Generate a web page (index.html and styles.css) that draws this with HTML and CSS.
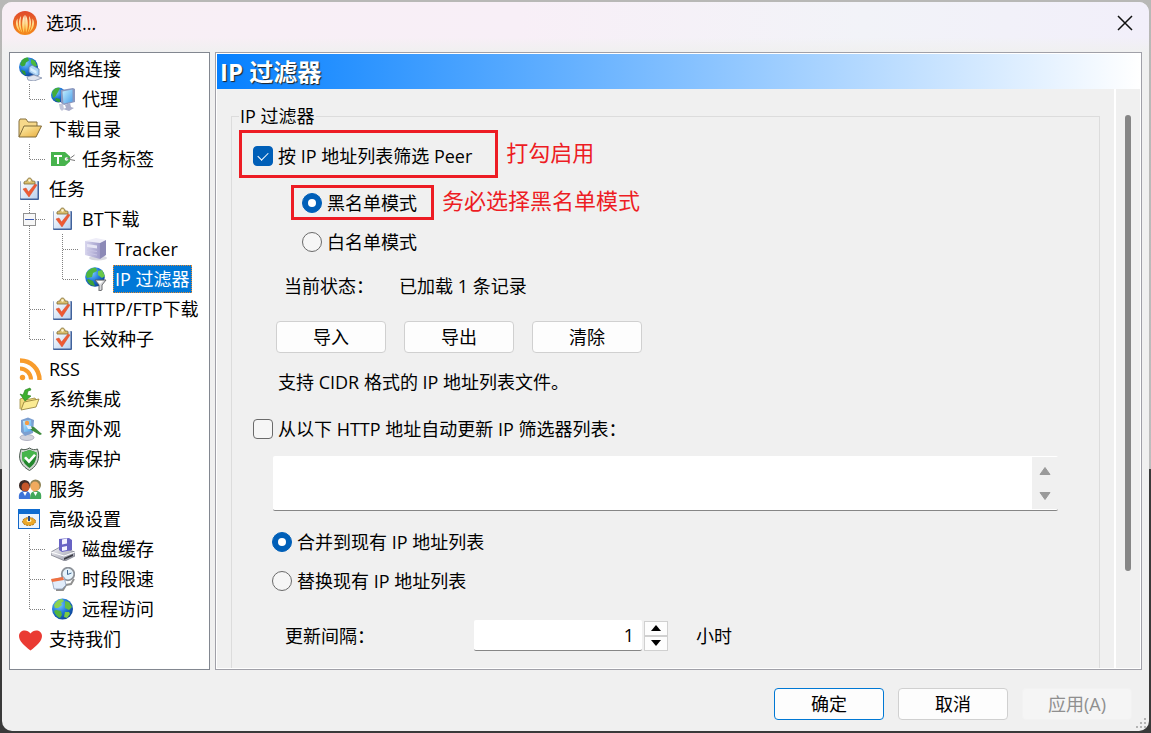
FILE: index.html
```html
<!DOCTYPE html>
<html lang="zh-CN">
<head>
  <meta charset="UTF-8" />
  <meta name="viewport" content="width=device-width, initial-scale=1.0"/>
  <title>选项...</title>
  <link rel="stylesheet" href="styles.css">
</head>
<body>
  <svg class="sprite" width="0" height="0" aria-hidden="true">
    <defs>
      <linearGradient id="gOrange" x1="0" y1="0" x2="0" y2="1">
        <stop offset="0" stop-color="#e0492c"/><stop offset="1" stop-color="#f58a1c"/>
      </linearGradient>
      <linearGradient id="gFlame" x1="0" y1="0" x2="0" y2="1">
        <stop offset="0" stop-color="#fff4e2"/><stop offset="1" stop-color="#ffc53a"/>
      </linearGradient>
      <radialGradient id="gGlobe" cx=".35" cy=".3" r=".8">
        <stop offset="0" stop-color="#7cc8ff"/><stop offset=".5" stop-color="#1f78d8"/><stop offset="1" stop-color="#083a8c"/>
      </radialGradient>
      <linearGradient id="gFolder" x1="0" y1="0" x2="1" y2="1">
        <stop offset="0" stop-color="#fff2b0"/><stop offset="1" stop-color="#e8ac3c"/>
      </linearGradient>
      <linearGradient id="gPaper" x1="0" y1="0" x2="1" y2="1">
        <stop offset="0" stop-color="#ffffff"/><stop offset="1" stop-color="#bcd2ee"/>
      </linearGradient>
      <linearGradient id="gScreen" x1="0" y1="0" x2="1" y2="1">
        <stop offset="0" stop-color="#c4f0ff"/><stop offset="1" stop-color="#4a9fea"/>
      </linearGradient>
      <linearGradient id="gMetal" x1="0" y1="0" x2="1" y2="1">
        <stop offset="0" stop-color="#f6f6fa"/><stop offset="1" stop-color="#8e90a0"/>
      </linearGradient>
      <linearGradient id="gServer" x1="0" y1="0" x2="1" y2="0">
        <stop offset="0" stop-color="#d8d6ee"/><stop offset="1" stop-color="#a09cca"/>
      </linearGradient>
    </defs>

    <!-- tree connectors -->
    <symbol id="tee" viewBox="0 0 33 30">
      <path d="M16.500 0V30M17 15.500H33" fill="none" stroke="#808080" stroke-dasharray="1 1"/>
    </symbol>
    <symbol id="elbow" viewBox="0 0 33 30">
      <path d="M16.500 0V16M17 15.500H33" fill="none" stroke="#808080" stroke-dasharray="1 1"/>
    </symbol>
    <symbol id="pipe" viewBox="0 0 33 30">
      <path d="M16.500 0V30" fill="none" stroke="#808080" stroke-dasharray="1 1"/>
    </symbol>
    <symbol id="minus" viewBox="0 0 33 30">
      <path d="M16.500 0V30M17 15.500H33" fill="none" stroke="#808080" stroke-dasharray="1 1"/>
      <rect x="10.500" y="9.500" width="12" height="12" fill="#f7f7f7" stroke="#919191"/>
      <path d="M12 15.500H21" stroke="#3c5ab4"/>
    </symbol>

    <!-- item icons -->
    <symbol id="network" viewBox="0 0 24 24">
      <circle cx="10.500" cy="10" r="9.500" fill="url(#gGlobe)"/>
      <path d="M4 3c2-2 4-2.500 6-2.500l1 3-3 2-1 3-3 1-2-2z" fill="#3aa83a"/>
      <path d="M3 13l4 1 1 4c-2 0-4-2-5-5z" fill="#2c9636"/>
      <path d="M13 2l4 2 2 5-3 1-3-4z" fill="#4cba3c"/>
      <path d="M11 10l3-2 7 4v6l-3 1-7-4z" fill="#a9d2f5" stroke="#5f7fae" stroke-width=".8"/>
      <path d="M12.500 10.500l6 3.500v3l-6-3.500z" fill="#d9efff"/>
      <path d="M9 20l7-2 8 3-8 3-6-1z" fill="#dfe4ee" stroke="#8693ae" stroke-width=".8"/>
    </symbol>
    <symbol id="proxy" viewBox="0 0 24 24">
      <circle cx="7.500" cy="8" r="7.500" fill="url(#gGlobe)"/>
      <path d="M1 5c2-4 5-5 8-4l-2 4-3 5-2 1z" fill="#44ad3b"/>
      <path d="M5 11l4 1v3c-2 .5-4-1-5-2z" fill="#2e9a36"/>
      <path d="M10 3l12-2 2 1v13l-11 3-3-2z" fill="#8b97be"/>
      <path d="M11.500 4.500l10-2v12l-9 2z" fill="url(#gScreen)"/>
      <path d="M14 18l5-2 1 4 3 1-5 3-6-2 3-1z" fill="#aaaecb"/>
      <path d="M8 17l4 0 1 5-2 2-2-2z" fill="#c3c6da"/>
    </symbol>
    <symbol id="folder" viewBox="0 0 24 24">
      <path d="M1 20V4l1-2h6l2 3h9v4" fill="#f7d98a" stroke="#86713f"/>
      <path d="M1 20l5-11h17.500L18 20z" fill="url(#gFolder)" stroke="#806a37"/>
    </symbol>
    <symbol id="tag" viewBox="0 0 24 24">
      <path d="M0 5h14l5 4.500v5L14 19H0z" fill="#47b34d"/>
      <path d="M3 8h8v2H8v7H6v-7H3z" fill="#fff"/>
      <circle cx="15.500" cy="12" r="1.800" fill="#fff"/>
      <path d="M15.500 12l4-1 4-3M19 12.500l5 1" fill="none" stroke="#777"/>
    </symbol>
    <symbol id="task" viewBox="0 0 24 24">
      <rect x="2" y="4" width="19" height="19" rx="1" fill="#41629c"/>
      <rect x="2.500" y="4" width="17" height="17.500" fill="url(#gPaper)"/>
      <path d="M6 7V5c1-1 2-1 3-1 0-4 5-4 5 0 2 0 3 0 3 1v2z" fill="#d9bd6b" stroke="#7b6a39" stroke-width=".8"/>
      <circle cx="11.500" cy="3.500" r="1.200" fill="#fff7d8"/>
      <path d="M5 12l3-1 2.500 4L17 7l2 1-8 12z" fill="#ee5a33" stroke="#d5482a" stroke-width=".5"/>
    </symbol>
    <symbol id="server" viewBox="0 0 24 24">
      <ellipse cx="14" cy="21" rx="9" ry="2.500" fill="#d8d8e0"/>
      <path d="M1 4l11-3 10 2-6 3z" fill="#eeedf8"/>
      <path d="M1 4l15 2v16L1 18z" fill="url(#gServer)"/>
      <path d="M16 6l6-3v15l-6 4z" fill="#8c89b6"/>
      <path d="M3 7l10 1.500v3L3 10z" fill="#e7e6f5"/>
      <path d="M3 13l10 1.500M3 16l10 2" stroke="#c8c5e4"/>
    </symbol>
    <symbol id="filter" viewBox="0 0 24 24">
      <circle cx="11" cy="10" r="9.800" fill="url(#gGlobe)"/>
      <path d="M3 5c3-4 7-5 9-4l1 3-4 2-1 4-5 1-1-3z" fill="#4fb63e"/>
      <path d="M14 4l4-1 3 6-3 2-4-3z" fill="#69c94a"/>
      <path d="M4 12l5 2 2 5c-4 0-7-3-8-6z" fill="#3da239"/>
      <path d="M11 13h11l-4 5v5l-3 1v-6z" fill="#d9dadd" stroke="#5c5d61" stroke-width=".9"/>
      <path d="M13 14h6l-3 3z" fill="#fff"/>
    </symbol>
    <symbol id="rss" viewBox="0 0 24 24">
      <circle cx="4.500" cy="20.500" r="2.700" fill="#f89c2c"/>
      <path d="M2 11.500c6 0 11 5 11 11" fill="none" stroke="#f89c2c" stroke-width="4"/>
      <path d="M2 3.500c11 0 19.500 8.500 19.500 19.500" fill="none" stroke="#f89c2c" stroke-width="4.400"/>
    </symbol>
    <symbol id="integrate" viewBox="0 0 24 24">
      <path d="M2 22V12l3-1 2 2 10-2 2 4" fill="#f2db7c" stroke="#9c8a3d" stroke-width=".8"/>
      <path d="M3 23l3-8 15-3-3 8z" fill="#fbeb94" stroke="#8d7a35" stroke-width=".8"/>
      <path d="M12 1l-5 2-2 5-3-1 5 7 6-5-4-1 1-4 3-1z" fill="#3db02e" stroke="#24801b" stroke-width=".6"/>
    </symbol>
    <symbol id="look" viewBox="0 0 24 24">
      <ellipse cx="9" cy="20.500" rx="7" ry="3" fill="#d2d3dc" stroke="#8b8fa5" stroke-width=".6"/>
      <path d="M3 3l7-2.500 6 2.500-1 13-8 3-4-4z" fill="#7c9fd0"/>
      <path d="M5 4l8-1 1 11-8 1z" fill="url(#gScreen)"/>
      <circle cx="9" cy="6" r="2.200" fill="#f49b45"/>
      <path d="M11 9l5 1 8 7-2 1-9-5z" fill="#3e8b3c"/>
      <path d="M8 8l5 1 1 3-4 0z" fill="#e4eefb"/>
    </symbol>
    <symbol id="shield" viewBox="0 0 24 24">
      <path d="M11.500 1c3 2 5 2 8 1l1 4c1 8-3 14-9 17.500C5 20 0 14 2 6l1-4c3 1 5 1 8.500-1z" fill="#d0d5d1" stroke="#4b5a50"/>
      <path d="M11.500 3l7 2.500c.5 7-2 12-7 15.500-5.500-3.500-8-8.500-7.500-15.500z" fill="#23872d"/>
      <path d="M11.500 3l7 2.500v3l-14 6C4 11 4 8 4 5.500z" fill="#46b54b"/>
      <path d="M6 11l2-1.500 3 3L16 7l2 1.500-7 8z" fill="#fff"/>
    </symbol>
    <symbol id="people" viewBox="0 0 24 24">
      <path d="M1 22c-1-6 2-8 6-8s6 2 5 8z" fill="#3d73d8"/>
      <path d="M12 22c0-6 2-8 6-8s6 2 5 8z" fill="#43a85a"/>
      <circle cx="6.500" cy="8.500" r="5.500" fill="#3c2a26"/>
      <ellipse cx="7.500" cy="10" rx="4" ry="4.500" fill="#c5562a"/>
      <circle cx="17.500" cy="8" r="5.500" fill="#8d8152"/>
      <ellipse cx="17" cy="9.500" rx="4.500" ry="5" fill="#f0aa5e"/>
      <path d="M5 15l2 4 2-4zM15.500 15l2 4 2-4z" fill="#fff"/>
    </symbol>
    <symbol id="advanced" viewBox="0 0 24 24">
      <rect x=".5" y="2.500" width="21" height="19" fill="#eaf4ff" stroke="#1468c8"/>
      <rect x="0" y="2" width="22" height="5" fill="#0f6cd0"/>
      <ellipse cx="11" cy="14.500" rx="6.500" ry="4" fill="#eba82a" stroke="#a56f12" stroke-dasharray="2 1"/>
      <ellipse cx="11" cy="13.500" rx="2.500" ry="1.500" fill="#fff1c4"/>
      <path d="M11 9v5" stroke="#26477f" stroke-width="2"/>
    </symbol>
    <symbol id="disk" viewBox="0 0 24 24">
      <path d="M0 15l9-5 15 5v4l-10 5L0 18z" fill="url(#gMetal)" stroke="#6f717d" stroke-width=".7"/>
      <path d="M0 15l13 4 11-4" fill="none" stroke="#fff"/>
      <path d="M13 21l9-4v2l-9 4z" fill="#3c3d44"/>
      <path d="M8 2l10-1 3 2v10l-10 2-3-2z" fill="#6863c4"/>
      <path d="M11 2.500l5-1v5l-5 1zM11 10l5-1v4l-5 1z" fill="#f3f3ff"/>
    </symbol>
    <symbol id="schedule" viewBox="0 0 24 24">
      <path d="M5 23l7 0 3-5 5-1 3-5" fill="none" stroke="#909090" stroke-width="2"/>
      <circle cx="17" cy="7" r="6.300" fill="#e4f2fb" stroke="#8d9299" stroke-width="1.800"/>
      <path d="M16.500 3v4.500l4-1.500" fill="none" stroke="#426890"/>
      <path d="M1 13l12-3 2 8-4 4-8 0z" fill="#e1ecfa" stroke="#8a9cb8" stroke-width=".8"/>
      <path d="M0 12l12-2 1 3-12 2z" fill="#ef7142"/>
    </symbol>
    <symbol id="globe" viewBox="0 0 24 24">
      <circle cx="11.500" cy="12" r="10.500" fill="url(#gGlobe)"/>
      <path d="M3 8c2-4 5-6 8-6l2 2-3 2 1 2-4 3-3 0z" fill="#8bd24e"/>
      <path d="M14 4l4 1 3 5-3 3-4-2 0-3z" fill="#63bd3f"/>
      <path d="M5 13l5 1 1 4-2 3c-3-1-5-4-6-7z" fill="#54b43e"/>
      <path d="M14 15l4 0 1 2-3 4-3-1z" fill="#7bcb45"/>
    </symbol>
    <symbol id="heart" viewBox="0 0 24 24">
      <path d="M12.500 23.500C6 18.500 1 14 1 9 1 3 9 1.500 12.500 6.500 16 1.500 24 3 24 9c0 5-5 9.500-11.500 14.500z" fill="#ea3b33"/>
    </symbol>
  </svg>

  <div class="dialog">
    <header class="titlebar">
      <svg class="logo" viewBox="0 0 24 24">
        <circle cx="12" cy="12" r="12" fill="url(#gOrange)"/>
        <path d="M11 22C8 16 9 7 11.500 4c.6 5 .6 12-.5 18zM13 22c3-6 2-15-.5-18-.6 5-.6 12 .5 18zM9.500 22C5 17 5 9 8 5c-.8 6-.4 12 1.500 17zM14.500 22c4.500-5 4.500-13 1.500-17 .8 6 .4 12-1.500 17zM7.500 21C2.500 17 2 11 4.500 7.500c0 5 1 10 3 13.500zM16.500 21c5-4 5.500-10 3-13.500 0 5-1 10-3 13.500z" fill="url(#gFlame)"/>
      </svg>
      <h1>选项...</h1>
      <button class="close" type="button" aria-label="关闭">
        <svg width="16" height="16" viewBox="0 0 16 16"><path d="M1 1l14 14M15 1L1 15" stroke="#111" stroke-width="1.500"/></svg>
      </button>
    </header>

    <main class="body">
      <nav class="tree">
        <a href="#"><svg class="icon"><use href="#network"/></svg><span>网络连接</span></a>
        <a href="#"><svg class="branch"><use href="#elbow"/></svg><svg class="icon"><use href="#proxy"/></svg><span>代理</span></a>
        <a href="#"><svg class="icon"><use href="#folder"/></svg><span>下载目录</span></a>
        <a href="#"><svg class="branch"><use href="#elbow"/></svg><svg class="icon"><use href="#tag"/></svg><span>任务标签</span></a>
        <a href="#"><svg class="icon"><use href="#task"/></svg><span>任务</span></a>
        <a href="#"><svg class="branch"><use href="#minus"/></svg><svg class="icon"><use href="#task"/></svg><span>BT下载</span></a>
        <a href="#"><svg class="branch"><use href="#pipe"/></svg><svg class="branch"><use href="#tee"/></svg><svg class="icon"><use href="#server"/></svg><span>Tracker</span></a>
        <a href="#" class="selected"><svg class="branch"><use href="#pipe"/></svg><svg class="branch"><use href="#elbow"/></svg><svg class="icon"><use href="#filter"/></svg><span>IP 过滤器</span></a>
        <a href="#"><svg class="branch"><use href="#tee"/></svg><svg class="icon"><use href="#task"/></svg><span>HTTP/FTP下载</span></a>
        <a href="#"><svg class="branch"><use href="#elbow"/></svg><svg class="icon"><use href="#task"/></svg><span>长效种子</span></a>
        <a href="#"><svg class="icon"><use href="#rss"/></svg><span>RSS</span></a>
        <a href="#"><svg class="icon"><use href="#integrate"/></svg><span>系统集成</span></a>
        <a href="#"><svg class="icon"><use href="#look"/></svg><span>界面外观</span></a>
        <a href="#"><svg class="icon"><use href="#shield"/></svg><span>病毒保护</span></a>
        <a href="#"><svg class="icon"><use href="#people"/></svg><span>服务</span></a>
        <a href="#"><svg class="icon"><use href="#advanced"/></svg><span>高级设置</span></a>
        <a href="#"><svg class="branch"><use href="#tee"/></svg><svg class="icon"><use href="#disk"/></svg><span>磁盘缓存</span></a>
        <a href="#"><svg class="branch"><use href="#tee"/></svg><svg class="icon"><use href="#schedule"/></svg><span>时段限速</span></a>
        <a href="#"><svg class="branch"><use href="#elbow"/></svg><svg class="icon"><use href="#globe"/></svg><span>远程访问</span></a>
        <a href="#"><svg class="icon"><use href="#heart"/></svg><span>支持我们</span></a>
      </nav>

      <section class="panel">
        <h2>IP 过滤器</h2>
        <div class="scroll-area">
          <div class="content">
            <fieldset>
              <legend>IP 过滤器</legend>

              <div class="line">
                <label class="option marked enable"><input type="checkbox" checked> 按 IP 地址列表筛选 Peer</label>
                <span class="note">打勾启用</span>
              </div>
              <div class="line mode">
                <label class="option marked"><input type="radio" name="mode" checked> 黑名单模式</label>
                <span class="note">务必选择黑名单模式</span>
              </div>
              <label class="option white"><input type="radio" name="mode"> 白名单模式</label>

              <div class="line status">
                <span class="caption">当前状态：</span>
                <span>已加载 1 条记录</span>
              </div>
              <div class="line actions">
                <button type="button">导入</button>
                <button type="button">导出</button>
                <button type="button">清除</button>
              </div>
              <p>支持 CIDR 格式的 IP 地址列表文件。</p>

              <label class="option update"><input type="checkbox"> 从以下 HTTP 地址自动更新 IP 筛选器列表：</label>
              <div class="url-box">
                <textarea aria-label="HTTP 地址"></textarea>
                <div class="arrows">
                  <svg width="14" height="10" viewBox="0 0 14 10"><path d="M7 1.500L12 8.500H2z" fill="#9a9a9a" stroke="#9a9a9a" stroke-linejoin="round"/></svg>
                  <svg width="14" height="10" viewBox="0 0 14 10"><path d="M7 8.500L2 1.500h10z" fill="#9a9a9a" stroke="#9a9a9a" stroke-linejoin="round"/></svg>
                </div>
              </div>
              <label class="option merge"><input type="radio" name="update" checked> 合并到现有 IP 地址列表</label>
              <label class="option replace"><input type="radio" name="update"> 替换现有 IP 地址列表</label>

              <div class="line interval">
                <label for="hours">更新间隔：</label>
                <input type="text" id="hours" value="1">
                <div class="spin">
                  <button type="button" aria-label="增加"><svg width="10" height="6" viewBox="0 0 10 6"><path d="M5 0l5 6H0z"/></svg></button>
                  <button type="button" aria-label="减少"><svg width="10" height="6" viewBox="0 0 10 6"><path d="M5 6L0 0h10z"/></svg></button>
                </div>
                <span class="unit">小时</span>
              </div>
            </fieldset>
          </div>
          <div class="scrollbar"><div class="thumb"></div></div>
        </div>
      </section>
    </main>

    <footer class="buttons">
      <button type="button" class="default">确定</button>
      <button type="button">取消</button>
      <button type="button" disabled>应用(A)</button>
    </footer>
    <svg class="grip" width="12" height="12" viewBox="0 0 12 12" fill="#b4b4b4">
      <path d="M9 0h2v2H9zM5 4h2v2H5zM9 4h2v2H9zM1 8h2v2H1zM5 8h2v2H5zM9 8h2v2H9z"/>
    </svg>
  </div>
</body>
</html>
```

FILE: styles.css
```css
* {
  box-sizing: border-box;
}

body {
  margin: 0;
  padding: 2px;
  height: 100vh;
  background: linear-gradient(#b8b8b6 0, #bdbdbd 64%, #3a3a3a 64%, #3a3a3a 100%);
  color: #000;
}

body, button, input, textarea {
  font-family: "Open Sans", "Noto Sans CJK SC", sans-serif;
  font-size: 18px;
  line-height: 24px;
}

.sprite {
  position: absolute;
}

.dialog {
  position: relative;
  display: flex;
  flex-direction: column;
  height: 100%;
  background-color: #f0f0f0;
  border-radius: 10px;
  overflow: hidden;
}

/* title bar */
.titlebar {
  display: flex;
  align-items: center;
  gap: 9px;
  flex: none;
  height: 50px;
  padding: 0 16px 9px 11px;
  background: linear-gradient(transparent 70%, #f0f0f0),
    linear-gradient(90deg, #f8eff5, #f8eff7 45%, #f2f3f8 75%, #f2effa);
}

.logo {
  width: 24px;
  height: 24px;
}

.titlebar h1 {
  flex: 1;
  margin: 0;
  font-size: 18px;
  font-weight: normal;
}

.close {
  display: flex;
  padding: 0;
  border: none;
  background: none;
}

.body {
  display: flex;
  flex: 1;
  min-height: 0;
  gap: 5px;
  padding: 0 7px;
}

/* category tree */
.tree {
  flex: none;
  width: 201px;
  padding: 1px 0 0 3px;
  background-color: #fff;
  border: 1px solid #828790;
  overflow: hidden;
}

.tree a {
  display: flex;
  align-items: center;
  height: 30px;
  color: #000;
  text-decoration: none;
  white-space: nowrap;
}

.tree .icon {
  flex: none;
  width: 24px;
  height: 24px;
  margin: 0 5px;
}

.tree .branch {
  flex: none;
  width: 33px;
  height: 30px;
}

.tree span {
  padding: 1px;
  border: 1px solid transparent;
}

.tree .selected span {
  background-color: #0078d7;
  border: 1px dotted #e88a30;
  color: #fff;
}

/* settings panel */
.panel {
  display: flex;
  flex-direction: column;
  flex: 1;
  min-width: 0;
  padding: 1px;
  background-color: #fff;
  border: 1px solid #a0a0a8;
}

.panel h2 {
  flex: none;
  margin: 0;
  padding: 0 3px;
  background: linear-gradient(90deg, #0580ff, #fff);
  color: #fff;
  font-size: 24px;
  line-height: 35px;
  text-shadow: 1px 1px 1px #222;
}

.scroll-area {
  display: flex;
  flex: 1;
  min-height: 0;
  background-color: #f0f0f0;
}

.content {
  flex: 1;
  min-width: 0;
  overflow: hidden;
  border-right: 2px solid #fff;
}

fieldset {
  min-width: 0;
  margin: 15px 14px 0;
  padding: 2px 41px 60px 7px;
  border: 1px solid #dcdcdc;
}

legend {
  padding: 0 1px;
}

.scrollbar {
  flex: none;
  width: 24px;
  padding: 26px 9px 0;
}

.thumb {
  height: 83%;
  max-height: 456px;
  background-color: #868686;
  border-radius: 3px;
}

.line {
  display: flex;
  align-items: center;
}

.option {
  display: flex;
  align-items: center;
  gap: 5px;
  width: max-content;
}

.marked {
  height: 35px;
  padding: 0 14px 0 8px;
  border: 3px solid #ed1c24;
}

.enable {
  height: 48px;
  padding: 4px 23px 0 11px;
}

.note {
  margin-left: 8px;
  padding-bottom: 5px;
  color: #ed1c24;
  font-size: 22px;
  line-height: 30px;
}

.mode {
  margin: 7px 0 10px 52px;
}

.white {
  margin-left: 63px;
}

.status {
  margin: 20px 0 23px 45px;
}

.caption {
  width: 115px;
}

.actions {
  gap: 18px;
  margin-left: 37px;
}

.actions button, .buttons button {
  width: 110px;
  height: 32px;
  padding: 0;
  background-color: #fdfdfd;
  border: 1px solid #d0d0d0;
  border-radius: 4px;
  color: #000;
}

fieldset p {
  margin: 17px 0 23px 39px;
}

.update {
  margin-left: 14px;
}

.url-box {
  display: flex;
  height: 55px;
  margin: 15px 0 19px 34px;
  background-color: #fff;
  border-bottom: 1px solid #868686;
  border-radius: 2px;
}

textarea {
  flex: 1;
  min-width: 0;
  padding: 4px;
  border: none;
  background: none;
  resize: none;
  outline: none;
}

.arrows {
  display: flex;
  flex-direction: column;
  align-items: center;
  justify-content: center;
  gap: 15px;
  width: 26px;
  margin: 1px 0;
  background-color: #f0f0f0;
}

.merge, .replace {
  margin-left: 33px;
}

.replace {
  margin-top: 15px;
}

.interval {
  margin: 27px 0 0 46px;
}

.interval label {
  width: 189px;
}

.interval input {
  width: 168px;
  height: 31px;
  padding: 0 8px;
  border: none;
  border-bottom: 1px solid #868686;
  border-radius: 2px;
  background-color: #fff;
  text-align: right;
}

.spin {
  display: flex;
  flex-direction: column;
  width: 24px;
  margin-left: 2px;
}

.spin button {
  display: flex;
  align-items: center;
  justify-content: center;
  height: 15px;
  padding: 0;
  background-color: #fdfdfd;
  border: 1px solid #d0d0d0;
}

.unit {
  margin-left: 28px;
}

/* check boxes and radios */
input[type="checkbox"], input[type="radio"] {
  appearance: none;
  display: flex;
  align-items: center;
  justify-content: center;
  width: 20px;
  height: 20px;
  margin: 0;
  background-color: #f6f6f6;
  border: 1px solid #6a6a6a;
  border-radius: 4px;
}

input[type="radio"] {
  border-radius: 50%;
}

input[type="checkbox"]:checked, input[type="radio"]:checked {
  background-color: #005fb8;
  border-color: #005fb8;
}

input[type="checkbox"]:checked::before {
  content: "";
  width: 9px;
  height: 5px;
  margin-bottom: 3px;
  border: solid #fff;
  border-width: 0 0 1px 1px;
  transform: rotate(-45deg);
}

input[type="radio"]:checked::before {
  content: "";
  width: 8px;
  height: 8px;
  background-color: #fff;
  border-radius: 50%;
}

/* bottom buttons */
.buttons {
  display: flex;
  justify-content: flex-end;
  gap: 14px;
  flex: none;
  padding: 18px 17px 11px;
}

.buttons .default {
  border-color: #0078d4;
}

.buttons button:disabled {
  background-color: #f5f5f5;
  border-color: #f2f2f2;
  color: #8f8f8f;
}

.grip {
  position: absolute;
  right: 2px;
  bottom: 1px;
}
```
